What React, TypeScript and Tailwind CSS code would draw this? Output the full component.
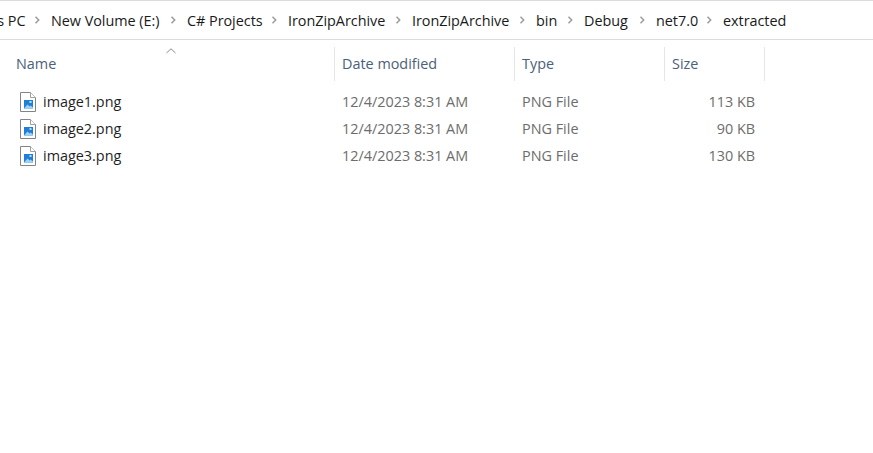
const crumbs = [
  { label: "This PC", w: "w-[74px]" },
  { label: "New Volume (E:)", w: "w-[136px]" },
  { label: "C# Projects", w: "w-[101px]" },
  { label: "IronZipArchive", w: "w-[124px]" },
  { label: "IronZipArchive", w: "w-[124px]" },
  { label: "bin", w: "w-[48px]" },
  { label: "Debug", w: "w-[72px]" },
  { label: "net7.0", w: "w-[67px]" },
];

const rows = [
  { name: "image1.png", size: "113 KB" },
  { name: "image2.png", size: "90 KB" },
  { name: "image3.png", size: "130 KB" },
];

function Chevron() {
  return (
    <svg width="7" height="8" viewBox="0 0 7 8" className="absolute right-[10px] top-[5px]" fill="none">
      <path d="M1.5 0.8 L4.7 4 L1.5 7.2" stroke="#9c9c9c" strokeWidth="1.5" />
    </svg>
  );
}

function FileIcon() {
  return (
    <svg width="16" height="20" viewBox="0 0 16 20" fill="none" className="shrink-0">
      <path d="M0.5 0.5 H10.5 L15.5 5.5 V19.5 H0.5 Z" fill="#fff" stroke="#848484" />
      <path d="M10.5 0.5 V5.5 H15.5" fill="#fff" stroke="#a0a0a0" />
      <rect x="4" y="8" width="9" height="8.5" fill="#1f7fd8" />
      <path d="M4 16.5 L7.5 12.5 L9.5 14.5 L10.5 13.5 L13 15.5 V16.5 Z" fill="#9fd2f5" />
      <rect x="9.5" y="9" width="2" height="2" fill="#bfe0f8" />
    </svg>
  );
}

export default function App() {
  return (
    <div className="w-[873px] h-[453px] overflow-hidden bg-white font-['Open_Sans','Noto_Sans',sans-serif] text-[14.4px] leading-5">
      <div className="h-[40px] flex items-center border-y border-[#dcdcdc] overflow-hidden text-[#1a1a1a] whitespace-nowrap">
        <div className="flex items-center ml-[-23px] mt-[1px] tracking-[-0.03px]">
          {crumbs.map((c) => (
            <div key={c.label + c.w} className={`relative flex items-center shrink-0 ${c.w}`}>
              <span>{c.label}</span>
              <Chevron />
            </div>
          ))}
          <span>extracted</span>
        </div>
      </div>

      <div className="relative flex h-[34px] mt-[7px] text-[#4c607a]">
        <svg width="10" height="6" viewBox="0 0 10 6" className="absolute left-[166px] top-[1px]" fill="none">
          <path d="M0.5 5 L5 0.8 L9.5 5" stroke="#8a8a8a" />
        </svg>
        <div className="w-[334px] pl-[16px] flex items-center">Name</div>
        <div className="w-[180px] pl-[7px] flex items-center border-l border-[#e5e5e5]">Date modified</div>
        <div className="w-[150px] pl-[7px] flex items-center border-l border-[#e5e5e5]">Type</div>
        <div className="w-[101px] pl-[7px] flex items-center border-l border-r border-[#e5e5e5]">Size</div>
      </div>

      <div className="mt-[7px] flex flex-col text-[#6d6d6d]">
        {rows.map((r) => (
          <div key={r.name} className="flex h-[27px] items-center">
            <div className="w-[334px] pl-[20px] flex items-center gap-[7px] text-[#1f1f1f]">
              <FileIcon />
              <span>{r.name}</span>
            </div>
            <div className="w-[180px] pl-[8px]">12/4/2023 8:31 AM</div>
            <div className="w-[150px] pl-[8px]">PNG File</div>
            <div className="w-[91px] text-right">{r.size}</div>
          </div>
        ))}
      </div>
    </div>
  );
}
